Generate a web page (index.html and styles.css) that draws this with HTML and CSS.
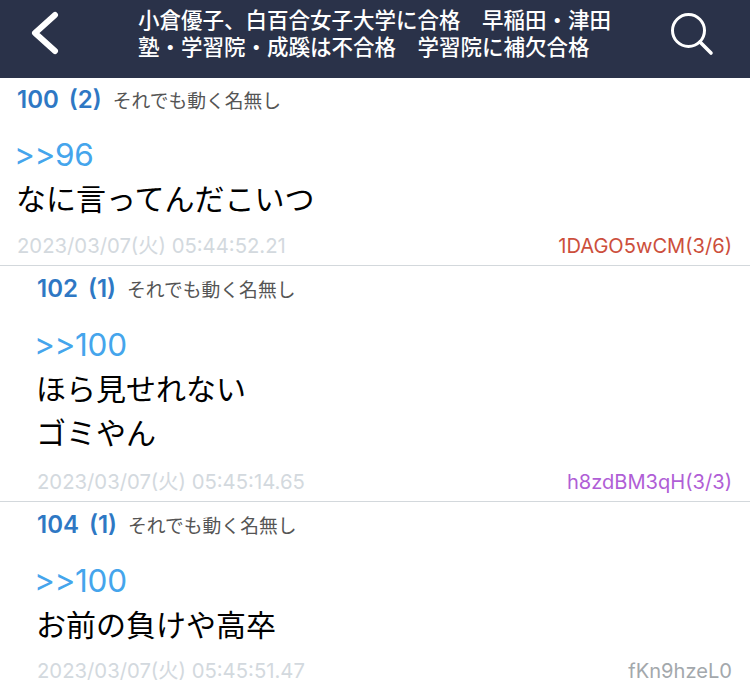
FILE: index.html
```html
<!DOCTYPE html>
<html lang="ja">
<head>
    <meta charset="UTF-8">
    <title>スレッド</title>
    <link rel="stylesheet" href="styles.css">
</head>
<body>
    <header class="topbar">
        <svg class="back-icon" width="30" height="44" viewBox="0 0 30 44">
            <path d="M25 4 L5 22 L25 40" fill="none" stroke="#fff" stroke-width="6" stroke-linecap="round" stroke-linejoin="round"/>
        </svg>
        <h1 class="topbar-title">小倉優子、白百合女子大学に合格　早稲田・津田塾・学習院・成蹊は不合格　学習院に補欠合格</h1>
        <svg class="search-icon" width="44" height="44" viewBox="0 0 44 44">
            <circle cx="18.5" cy="18.5" r="16" fill="none" stroke="#fff" stroke-width="3"/>
            <path d="M30 30 L41 41" fill="none" stroke="#fff" stroke-width="3.6" stroke-linecap="round"/>
        </svg>
    </header>

    <main>
        <article class="post post-first">
            <div class="post-head">
                <span class="post-no">100</span>
                <span class="post-count">(2)</span>
                <span class="post-name">それでも動く名無し</span>
            </div>
            <div class="post-body">
                <p class="anchor">&gt;&gt;96</p>
                <p>なに言ってんだこいつ</p>
            </div>
            <div class="post-foot">
                <span class="post-date">2023/03/07(火) 05:44:52.21</span>
                <span class="post-id id-red">1DAGO5wCM(3/6)</span>
            </div>
        </article>

        <article class="post post-reply">
            <div class="post-head">
                <span class="post-no">102</span>
                <span class="post-count">(1)</span>
                <span class="post-name">それでも動く名無し</span>
            </div>
            <div class="post-body">
                <p class="anchor">&gt;&gt;100</p>
                <p>ほら見せれない</p>
                <p>ゴミやん</p>
            </div>
            <div class="post-foot">
                <span class="post-date">2023/03/07(火) 05:45:14.65</span>
                <span class="post-id id-purple">h8zdBM3qH(3/3)</span>
            </div>
        </article>

        <article class="post post-reply post-last">
            <div class="post-head">
                <span class="post-no">104</span>
                <span class="post-count">(1)</span>
                <span class="post-name">それでも動く名無し</span>
            </div>
            <div class="post-body">
                <p class="anchor">&gt;&gt;100</p>
                <p>お前の負けや高卒</p>
            </div>
            <div class="post-foot">
                <span class="post-date">2023/03/07(火) 05:45:51.47</span>
                <span class="post-id id-grey">fKn9hzeL0</span>
            </div>
        </article>
    </main>
</body>
</html>
```

FILE: styles.css
```css
html, body {
    height: 690px;
    overflow: hidden;
}

body {
    margin: 0;
    background-color: #ffffff;
    font-family: Inter, "Noto Sans CJK JP", sans-serif;
}

.topbar {
    display: flex;
    align-items: center;
    height: 78px;
    background-color: #2a3249;
    box-sizing: border-box;
    padding: 0 36px 0 30px;
}

.back-icon {
    flex: none;
    margin-bottom: 12px;
}

.topbar-title {
    flex: none;
    width: 476px;
    margin: 0 0 11px 78px;
    color: #ffffff;
    font-size: 21.5px;
    font-weight: 500;
    line-height: 27px;
}

.search-icon {
    flex: none;
    margin-left: auto;
    margin-bottom: 10px;
}

.post {
    display: flex;
    flex-direction: column;
    border-bottom: 1px solid #d3d8dc;
    padding: 0 18px 5px 37px;
    box-sizing: border-box;
    height: 236px;
}

.post-first {
    height: 188px;
    padding-left: 17px;
}

.post-first .post-head {
    height: 42px;
}

.post-last {
    border-bottom: none;
    height: 188px;
}

.post-head {
    display: flex;
    align-items: center;
    flex: none;
    height: 44px;
    color: #2e78c4;
    font-size: 24px;
    font-weight: 600;
}

.post-count {
    margin-left: 10px;
}

.post-name {
    margin-left: 11px;
    color: #555555;
    font-size: 18.8px;
    font-weight: 400;
}

.post-body {
    margin-left: -1px;
    padding-top: 13px;
    font-size: 30px;
    line-height: 44px;
    color: #000000;
}

.post-body p {
    margin: 0;
}

.post-body .anchor {
    margin-left: -2px;
    color: #45a5ec;
    font-size: 31.5px;
    letter-spacing: -0.3px;
}

.post-foot {
    display: flex;
    justify-content: space-between;
    align-items: center;
    margin-top: auto;
    font-size: 20.1px;
    line-height: 28px;
}

.post-date {
    color: #d3d9de;
    font-size: 20.3px;
}

.id-red {
    color: #cc4f3c;
}

.id-purple {
    color: #b05ed6;
}

.id-grey {
    color: #a3a8ac;
}
```
